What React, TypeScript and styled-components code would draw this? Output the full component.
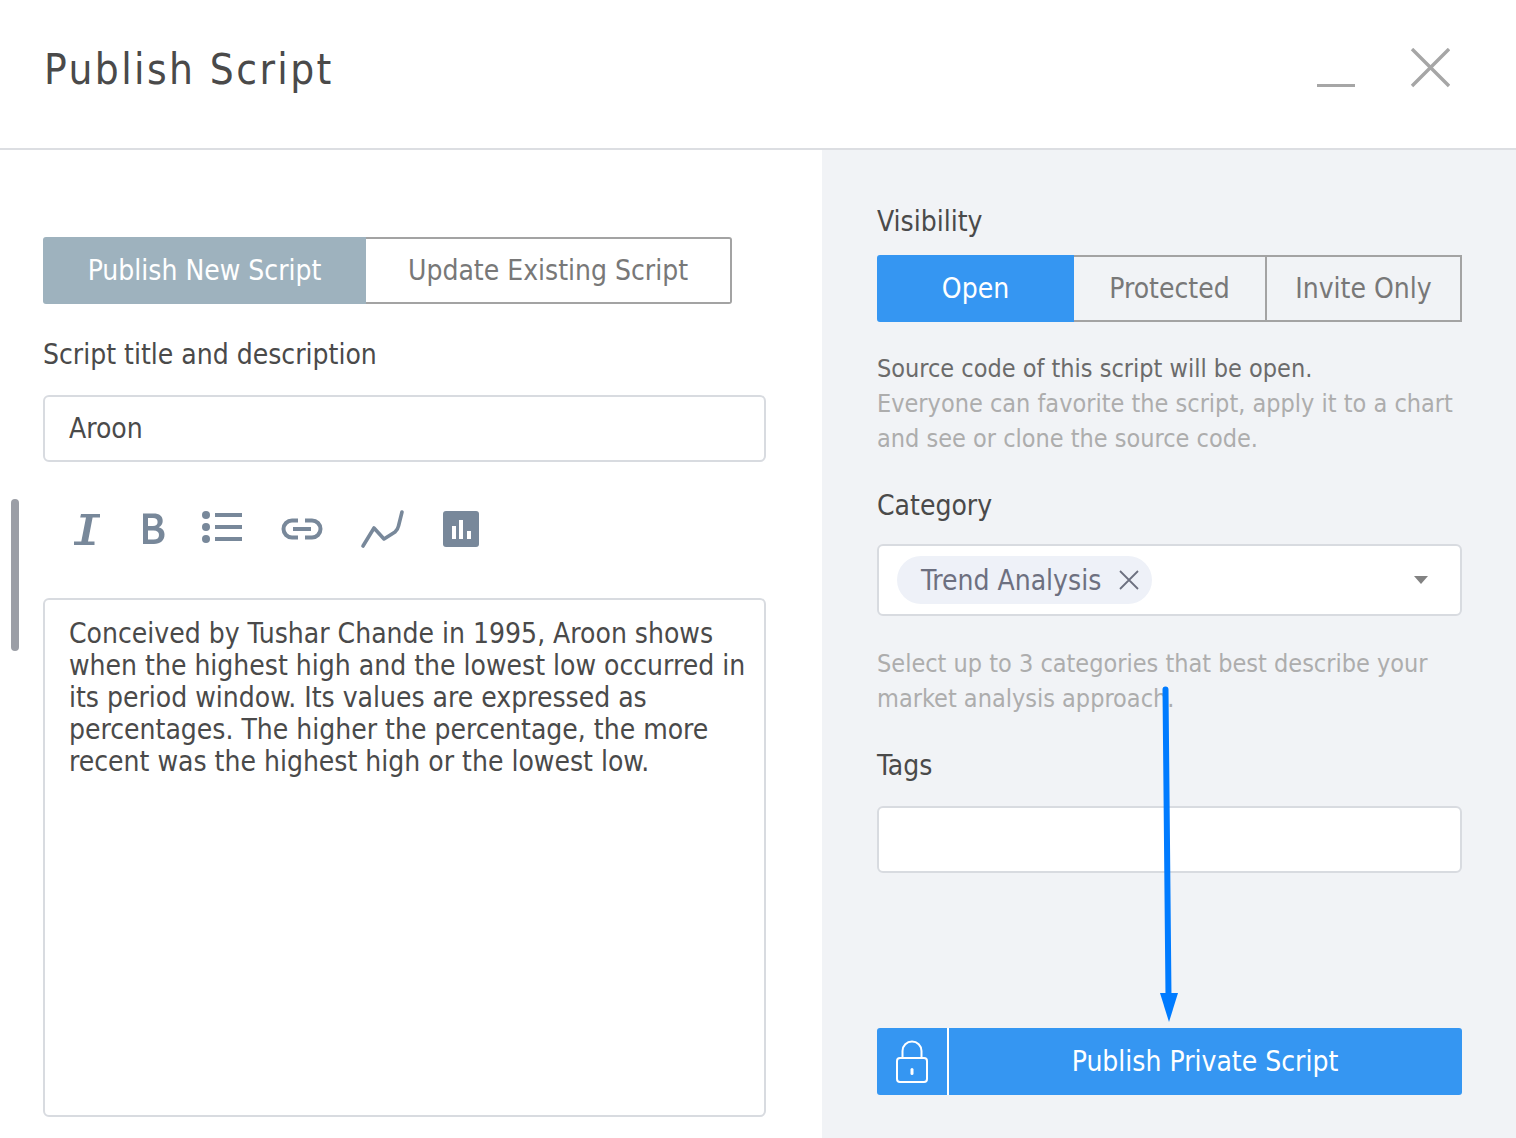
import React from 'react'
import styled, { createGlobalStyle } from 'styled-components'

const GlobalStyle = createGlobalStyle`
  html, body {
    margin: 0;
    padding: 0;
    background: #fff;
    overflow: hidden;
  }
  * {
    box-sizing: border-box;
  }
`

const Dialog = styled.div`
  position: relative;
  width: 1516px;
  height: 1138px;
  overflow: hidden;
  font-family: 'DejaVu Sans Condensed', 'DejaVu Sans', sans-serif;
  color: #4a4a4a;
  display: flex;
  flex-direction: column;
`

const Header = styled.header`
  height: 150px;
  flex: none;
  border-bottom: 2px solid #dcdee2;
  padding: 0 66px 0 44px;
  display: flex;
  align-items: center;
  justify-content: space-between;
`

const Title = styled.h1`
  margin: 0 0 8px;
  font-size: 42px;
  line-height: 54px;
  font-weight: 400;
  letter-spacing: 2.4px;
  color: #4a4a4a;
`

const WindowButtons = styled.div`
  display: flex;
  align-items: flex-start;
  gap: 54px;
  margin-bottom: 13px;
`

const Body = styled.div`
  flex: 1;
  display: flex;
  min-height: 0;
`

const LeftPane = styled.section`
  width: 822px;
  flex: none;
  padding: 87px 56px 0 43px;
`

const RightPane = styled.section`
  flex: 1;
  background: #f1f3f6;
  padding: 55px 54px 0 55px;
  display: flex;
  flex-direction: column;
`

const Tabs = styled.div`
  display: flex;
  width: 689px;
  height: 67px;
`

const Tab = styled.div<{ $active?: boolean; $grow: number }>`
  flex: ${(p) => p.$grow} 0 0;
  display: flex;
  align-items: center;
  justify-content: center;
  font-size: 28px;
  background: ${(p) => (p.$active ? '#9eb2be' : '#fff')};
  color: ${(p) => (p.$active ? '#fff' : '#787878')};
  border: ${(p) => (p.$active ? 'none' : '2px solid #a3a3a3')};
  border-left: none;
  border-radius: ${(p) => (p.$active ? '3px 0 0 3px' : '0 3px 3px 0')};
`

const Label = styled.div<{ $top: number }>`
  margin-top: ${(p) => p.$top}px;
  font-size: 28px;
  line-height: 34px;
  color: #4a4a4a;
`

const Field = styled.div<{ $height?: number }>`
  height: ${(p) => p.$height ?? 67}px;
  background: #fff;
  border: 2px solid #d8dbe0;
  border-radius: 6px;
  display: flex;
  align-items: center;
`

const TitleField = styled(Field)`
  margin-top: 23px;
  padding-left: 24px;
  font-size: 28px;
`

const Toolbar = styled.div`
  display: flex;
  align-items: center;
  height: 38px;
  margin: 48px 0 0;
`

const ToolIcon = styled.svg<{ $left: number }>`
  display: block;
  flex: none;
  margin-left: ${(p) => p.$left}px;
`

const BoldGlyph = styled.span`
  flex: none;
  margin-left: 40px;
  width: 40px;
`

const Editor = styled.div`
  margin-top: 50px;
  height: 519px;
  background: #fff;
  border: 2px solid #d8dbe0;
  border-radius: 6px;
  padding: 18px 20px 0 24px;
  font-size: 28px;
  line-height: 32px;
  color: #4a4a4a;
  white-space: nowrap;
`

const Scrollbar = styled.div`
  position: absolute;
  left: 11px;
  top: 499px;
  width: 8px;
  height: 152px;
  border-radius: 4px;
  background: #9b9ea6;
`

const Segments = styled.div`
  display: flex;
  height: 67px;
  margin-top: 16px;
`

const Segment = styled.div<{ $width: number; $active?: boolean }>`
  width: ${(p) => p.$width}px;
  display: flex;
  align-items: center;
  justify-content: center;
  font-size: 28px;
  color: ${(p) => (p.$active ? '#fff' : '#787878')};
  background: ${(p) => (p.$active ? '#3596f2' : 'transparent')};
  border: 2px solid ${(p) => (p.$active ? '#3596f2' : '#a3a3a3')};
  border-left: ${(p) => (p.$active ? undefined : 'none')};
  border-radius: ${(p) => (p.$active ? '3px 0 0 3px' : '0')};
`

const Hint = styled.p<{ $top: number }>`
  margin: ${(p) => p.$top}px 0 0;
  font-size: 25px;
  line-height: 35px;
  color: #adadad;
  white-space: nowrap;
`

const Strong = styled.span`
  color: #6b6b6b;
`

const SelectField = styled(Field)`
  margin-top: 21px;
  padding: 0 32px 0 18px;
  justify-content: space-between;
`

const Chip = styled.div`
  height: 48px;
  width: 255px;
  border-radius: 24px;
  background: #eef1f8;
  color: #6d7080;
  font-size: 28px;
  display: flex;
  align-items: center;
  padding-left: 24px;
  gap: 18px;
`

const Caret = styled.div`
  width: 0;
  height: 0;
  border-left: 7px solid transparent;
  border-right: 7px solid transparent;
  border-top: 8px solid #828282;
`

const Spacer = styled.div`
  height: 155px;
  flex: none;
`

const PublishButton = styled.div`
  display: flex;
  height: 67px;
  border-radius: 3px;
  background: #3596f2;
  color: #fff;
  font-size: 28px;
`

const LockBox = styled.div`
  width: 72px;
  flex: none;
  border-right: 2px solid #fff;
  display: flex;
  align-items: center;
  justify-content: center;
`

const PublishLabel = styled.div`
  flex: 1;
  display: flex;
  align-items: center;
  justify-content: center;
  margin-left: -1px;
`

const Arrow = styled.svg`
  position: absolute;
  left: 1150px;
  top: 680px;
`

const iconColor = '#78889a'

const App: React.FC = () => {
  return (
    <Dialog>
      <GlobalStyle />
      <Header>
        <Title>Publish Script</Title>
        <WindowButtons>
          <svg width="40" height="40" viewBox="0 0 40 40">
            <path d="M1 37.5h38" stroke="#a6a6a6" strokeWidth="3" />
          </svg>
          <svg width="40" height="40" viewBox="0 0 40 40">
            <path d="M2 1l37 37M39 1L2 38" stroke="#a6a6a6" strokeWidth="3.4" fill="none" />
          </svg>
        </WindowButtons>
      </Header>
      <Body>
        <LeftPane>
          <Tabs>
            <Tab $active $grow={324}>
              Publish New Script
            </Tab>
            <Tab $grow={365}>Update Existing Script</Tab>
          </Tabs>
          <Label $top={34}>Script title and description</Label>
          <TitleField>Aroon</TitleField>
          <Toolbar>
            <ToolIcon $left={30} width="28" height="36" viewBox="0 0 28 36">
              <path
                d="M8 3h19v3.4h-7.4L15 30.4h6.5V34H1v-3.6h7.3L13 6.4H7.2z"
                fill={iconColor}
              />
            </ToolIcon>
            <ToolIcon $left={40} width="26" height="36" viewBox="0 0 26 36">
              <path
                fillRule="evenodd"
                d="M2 2.5h10.5c6 0 9.2 2.6 9.2 7.6 0 3-1.5 5.2-4 6.2 3.6.8 5.8 3.4 5.8 7.3 0 6-4 9.4-10.6 9.4H2zM7 7v8h5c3 0 4.6-1.3 4.6-4S15 7 12 7zM7 19.400v9.100h5.700c3.500 0 5.300-1.500 5.300-4.600 0-3-1.900-4.500-5.500-4.500z"
                fill={iconColor}
              />
            </ToolIcon>
            <ToolIcon $left={34} width="42" height="36" viewBox="0 0 42 36">
              <g fill={iconColor}>
                <circle cx="5" cy="4" r="4" />
                <circle cx="5" cy="16" r="4" />
                <circle cx="5" cy="28" r="4" />
                <rect x="14" y="2" width="27" height="4" />
                <rect x="14" y="14" width="27" height="4" />
                <rect x="14" y="26" width="27" height="4" />
              </g>
            </ToolIcon>
            <ToolIcon $left={38} width="42" height="24" viewBox="0 0 42 24">
              <path
                d="M17 3.500H11a8.500 8.500 0 0 0 0 17h6M24 3.500h7a8.500 8.500 0 0 1 0 17h-7M12 12h18"
                stroke={iconColor}
                strokeWidth="4"
                fill="none"
              />
            </ToolIcon>
            <ToolIcon $left={37} width="48" height="40" viewBox="0 0 48 40">
              <path
                d="M3 37l11-18 10 11 11-7c2-2 3-3 3.500-6L42 3"
                stroke={iconColor}
                strokeWidth="3.600"
                strokeLinecap="round"
                strokeLinejoin="round"
                fill="none"
              />
            </ToolIcon>
            <ToolIcon $left={35} width="36" height="36" viewBox="0 0 36 36">
              <rect width="36" height="36" rx="3" fill={iconColor} />
              <path d="M9 15h4v13H9zM16 9h4v19h-4zM24 20h4v8h-4z" fill="#fff" />
            </ToolIcon>
          </Toolbar>
          <Editor>
            Conceived by Tushar Chande in 1995, Aroon shows
            <br />
            when the highest high and the lowest low occurred in
            <br />
            its period window. Its values are expressed as
            <br />
            percentages. The higher the percentage, the more
            <br />
            recent was the highest high or the lowest low.
          </Editor>
        </LeftPane>
        <RightPane>
          <Label $top={0}>Visibility</Label>
          <Segments>
            <Segment $width={197} $active>
              Open
            </Segment>
            <Segment $width={193}>Protected</Segment>
            <Segment $width={195}>Invite Only</Segment>
          </Segments>
          <Hint $top={29}>
            <Strong>Source code of this script will be open.</Strong>
            <br />
            Everyone can favorite the script, apply it to a chart
            <br />
            and see or clone the source code.
          </Hint>
          <Label $top={33}>Category</Label>
          <SelectField $height={72}>
            <Chip>
              Trend Analysis
              <svg width="20" height="20" viewBox="0 0 20 20">
                <path d="M1 1l18 18M19 1L1 19" stroke="#6d7080" strokeWidth="1.800" fill="none" />
              </svg>
            </Chip>
            <Caret />
          </SelectField>
          <Hint $top={30}>
            Select up to 3 categories that best describe your
            <br />
            market analysis approach.
          </Hint>
          <Label $top={33}>Tags</Label>
          <Field $height={67} style={{ marginTop: 23 }} />
          <Spacer />
          <PublishButton>
            <LockBox>
              <svg width="34" height="44" viewBox="0 0 34 44">
                <path
                  d="M7.500 18V11a9.500 9.500 0 0 1 19 0v7"
                  stroke="#fff"
                  strokeWidth="2"
                  fill="none"
                />
                <rect x="2" y="18" width="30" height="24" rx="3" stroke="#fff" strokeWidth="2" fill="none" />
                <rect x="15.500" y="28" width="3" height="7" rx="1.500" fill="#fff" />
              </svg>
            </LockBox>
            <PublishLabel>Publish Private Script</PublishLabel>
          </PublishButton>
        </RightPane>
      </Body>
      <Scrollbar />
      <Arrow width="40" height="350" viewBox="0 0 40 350">
        <path d="M15.500 9.500L18.500 316" stroke="#007bff" strokeWidth="6" strokeLinecap="round" fill="none" />
        <path d="M10 313h18l-9 29z" fill="#007bff" />
      </Arrow>
    </Dialog>
  )
}

export default App
